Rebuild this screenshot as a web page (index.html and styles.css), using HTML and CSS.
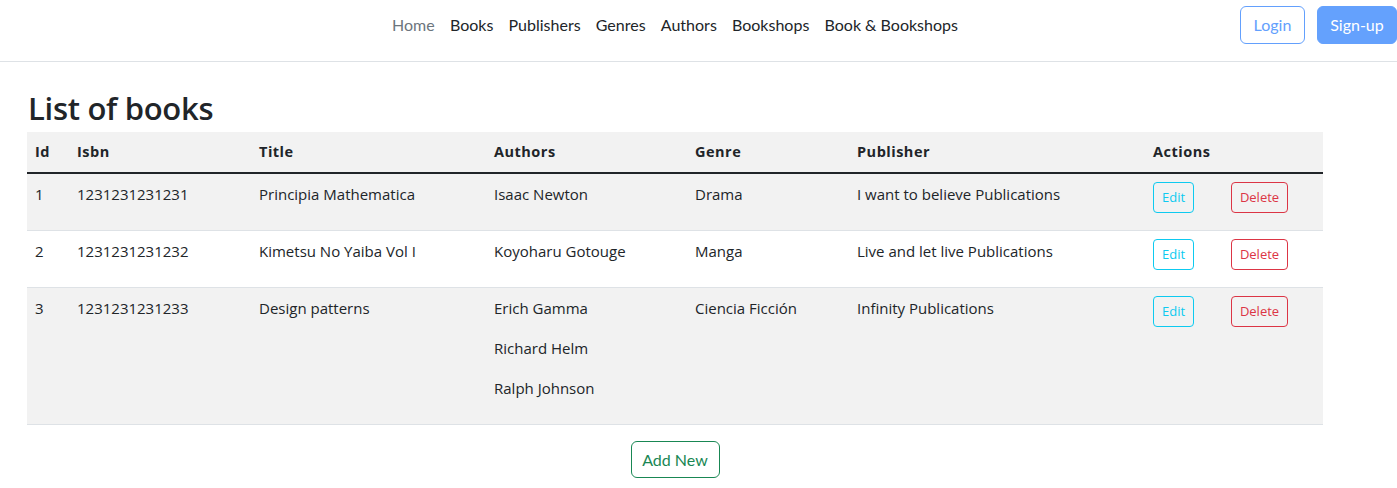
FILE: index.html
```html
<!DOCTYPE html>
<html lang="en">
<head>
<meta charset="utf-8">
<title>List of books</title>
<link rel="stylesheet" href="styles.css">
</head>
<body>
<header class="topbar">
  <div class="spacer"></div>
  <nav class="nav">
    <a class="nav-link active" href="#">Home</a>
    <a class="nav-link" href="#">Books</a>
    <a class="nav-link" href="#">Publishers</a>
    <a class="nav-link" href="#">Genres</a>
    <a class="nav-link" href="#">Authors</a>
    <a class="nav-link" href="#">Bookshops</a>
    <a class="nav-link" href="#">Book &amp; Bookshops</a>
  </nav>
  <div class="auth">
    <button class="btn btn-login">Login</button>
    <button class="btn btn-signup">Sign-up</button>
  </div>
</header>
<main class="content">
  <h1 class="title">List of books</h1>
  <table class="books">
    <colgroup>
      <col class="c-id"><col class="c-isbn"><col class="c-title"><col class="c-authors"><col class="c-genre"><col class="c-pub"><col class="c-act">
    </colgroup>
    <thead>
      <tr><th>Id</th><th>Isbn</th><th>Title</th><th>Authors</th><th>Genre</th><th>Publisher</th><th>Actions</th></tr>
    </thead>
    <tbody>
      <tr class="odd">
        <td><p>1</p></td><td><p>1231231231231</p></td><td><p>Principia Mathematica</p></td>
        <td><p>Isaac Newton</p></td><td><p>Drama</p></td><td><p>I want to believe Publications</p></td>
        <td><div class="actions"><button class="btn-sm btn-edit">Edit</button><button class="btn-sm btn-del">Delete</button></div></td>
      </tr>
      <tr>
        <td><p>2</p></td><td><p>1231231231232</p></td><td><p>Kimetsu No Yaiba Vol I</p></td>
        <td><p>Koyoharu Gotouge</p></td><td><p>Manga</p></td><td><p>Live and let live Publications</p></td>
        <td><div class="actions"><button class="btn-sm btn-edit">Edit</button><button class="btn-sm btn-del">Delete</button></div></td>
      </tr>
      <tr class="odd">
        <td><p>3</p></td><td><p>1231231231233</p></td><td><p>Design patterns</p></td>
        <td><p>Erich Gamma</p><p>Richard Helm</p><p>Ralph Johnson</p></td><td><p>Ciencia Ficción</p></td><td><p>Infinity Publications</p></td>
        <td><div class="actions"><button class="btn-sm btn-edit">Edit</button><button class="btn-sm btn-del">Delete</button></div></td>
      </tr>
    </tbody>
  </table>
  <div class="add-row"><button class="btn btn-add">Add New</button></div>
</main>
</body>
</html>
```
FILE: styles.css
```css
* { box-sizing: border-box; }
html, body { margin: 0; padding: 0; }
body {
  font-family: "Open Sans", "Noto Sans", sans-serif;
  color: #212529;
  background: #fff;
  width: 1397px;
  overflow: hidden;
}
.topbar {
  display: flex;
  align-items: flex-start;
  height: 62px;
  padding-top: 6px;
  border-bottom: 1px solid #dee2e6;
}
.spacer { width: 118px; }
.nav {
  flex: 1;
  display: flex;
  justify-content: center;
  align-items: center;
  height: 37px;
}
.nav-link {
  font-family: Lato, "Open Sans", sans-serif;
  font-size: 16px;
  color: #212529;
  text-decoration: none;
  padding: 0 7.6px;
}
.nav-link.active { color: #6c757d; }
.auth {
  display: flex;
  gap: 12px;
  margin-left: 8px;
}
.btn {
  font-family: Lato, "Open Sans", sans-serif;
  font-size: 16px;
  height: 38px;
  padding: 0 12px;
  border-radius: 6px;
  background: #fff;
  border: 1px solid transparent;
  line-height: 1;
  white-space: nowrap;
}
.btn-login { border-color: #63a0fd; color: #63a0fd; width: 65px; }
.btn-signup { background: #64a1fd; border-color: #64a1fd; color: #fff; width: 80px; }
.content { padding: 0 74px 0 27px; }
.title {
  font-size: 31px;
  font-weight: 600;
  margin: 26px 0 4px 1px;
  line-height: 40px;
  letter-spacing: -0.3px;
}
.books {
  width: 1296px;
  border-collapse: collapse;
  font-size: 15px;
}
.c-id { width: 42px; }
.c-isbn { width: 182px; }
.c-title { width: 235px; }
.c-authors { width: 201px; }
.c-genre { width: 162px; }
.c-pub { width: 296px; }
.books th {
  text-align: left;
  font-weight: 700;
  letter-spacing: 0.5px;
  line-height: 24px;
  padding: 8px;
  background: #f2f2f2;
  border-bottom: 2px solid #212529;
  font-size: 14.5px;
}
.books td {
  vertical-align: top;
  padding: 8px 8px 8px;
  border-bottom: 1px solid #dee2e6;
}
.books tr.odd td { background: #f2f2f2; }
.books td p { margin: 0 0 16px; line-height: 24px; }
.actions {
  display: flex;
  gap: 37px;
  margin-bottom: 9px;
}
.btn-sm {
  font-family: "Open Sans", sans-serif;
  font-size: 13px;
  height: 31px;
  padding: 0 7px;
  border-radius: 4px;
  background: transparent;
  line-height: 1;
}
.btn-edit { border: 1px solid #0dcaf0; color: #0dcaf0; width: 41px; }
.btn-del { border: 1px solid #dc3545; color: #dc3545; width: 57px; }
.add-row {
  width: 1296px;
  display: flex;
  justify-content: center;
  padding-top: 16px;
}
.btn-add { border-color: #198754; color: #198754; width: 89px; height: 37px; padding: 0; }
```
